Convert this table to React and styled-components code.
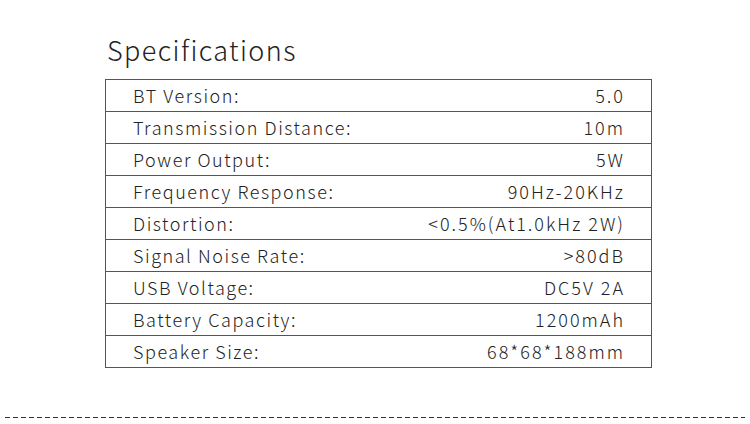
import React from "react";
import styled, { createGlobalStyle } from "styled-components";

const GlobalStyle = createGlobalStyle`
  html, body {
    margin: 0;
    padding: 0;
    background: #fff;
  }
  body {
    font-family: "Noto Sans CJK SC", "Noto Sans", sans-serif;
    color: #222;
  }
`;

const Page = styled.div`
  width: 750px;
  height: 424px;
  box-sizing: border-box;
  padding-top: 30px;
  display: flex;
  flex-direction: column;
`;

const Title = styled.h2`
  margin: 0 0 0 107px;
  font-size: 27px;
  font-weight: 300;
  letter-spacing: 1.4px;
  line-height: 40px;
  color: #222;
`;

const Table = styled.table`
  margin: 9px 0 0 105px;
  width: 547px;
  border-collapse: collapse;
  border: 1px solid #555;
`;

const Row = styled.tr`
  border-bottom: 1px solid #555;
  height: 31px;
`;

const Cell = styled.td`
  padding: 0 ${(p) => (p.$right ? "26px" : "27px")};
  font-size: 18px;
  font-weight: 300;
  letter-spacing: ${(p) => (p.$right ? "2px" : "1.55px")};
  line-height: 31px;
  color: #222;
  text-align: ${(p) => (p.$right ? "right" : "left")};
  white-space: nowrap;
`;

const Divider = styled.div`
  margin: 49px 5px 0 5px;
  height: 1px;
  background: repeating-linear-gradient(
    to right,
    #333 0 5px,
    transparent 5px 8px
  );
`;

const specs = [
  ["BT Version:", "5.0"],
  ["Transmission Distance:", "10m"],
  ["Power Output:", "5W"],
  ["Frequency Response:", "90Hz-20KHz"],
  ["Distortion:", "<0.5%(At1.0kHz 2W)"],
  ["Signal Noise Rate:", ">80dB"],
  ["USB Voltage:", "DC5V 2A"],
  ["Battery Capacity:", "1200mAh"],
  ["Speaker Size:", "68*68*188mm"],
];

export default function App() {
  return (
    <>
      <GlobalStyle />
      <Page>
        <Title>Specifications</Title>
        <Table>
          <tbody>
            {specs.map(([label, value]) => (
              <Row key={label}>
                <Cell>{label}</Cell>
                <Cell $right>{value}</Cell>
              </Row>
            ))}
          </tbody>
        </Table>
        <Divider />
      </Page>
    </>
  );
}
